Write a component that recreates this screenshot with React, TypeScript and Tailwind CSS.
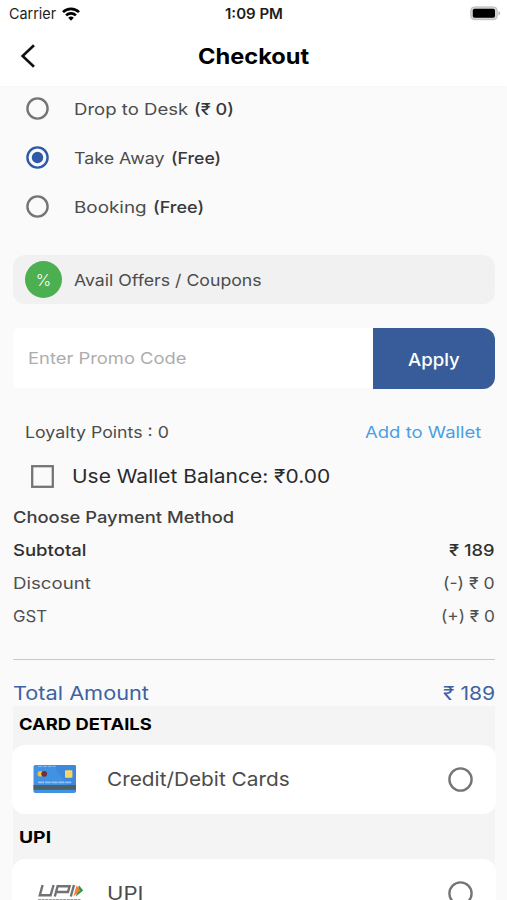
import { useLayoutEffect, useRef } from "react";
import type { ReactNode } from "react";
import clsx from "clsx";

/** Single line of text stretched horizontally to fill the width set by its classes. */
function Label({ children, className }: { children: ReactNode; className?: string }) {
  const box = useRef<HTMLSpanElement>(null);
  const inner = useRef<HTMLSpanElement>(null);
  useLayoutEffect(() => {
    if (!box.current || !inner.current) return;
    const ratio = box.current.clientWidth / inner.current.offsetWidth;
    inner.current.style.transform = `scaleX(${ratio})`;
  });
  return (
    <span ref={box} className={clsx("block shrink-0 whitespace-nowrap", className)}>
      <span ref={inner} className="inline-block origin-left">
        {children}
      </span>
    </span>
  );
}

function Radio({ checked, large }: { checked?: boolean; large?: boolean }) {
  return (
    <svg
      viewBox={large ? "0 0 25 25" : "0 0 23 23"}
      className={clsx("block shrink-0", large ? "size-[25px]" : "size-[23px]", checked ? "text-[#2f5aa8]" : "text-[#757575]")}
    >
      <circle cx="50%" cy="50%" r={large ? 11.1 : 10.1} fill="none" stroke="currentColor" strokeWidth="2.4" />
      {checked && <circle cx="50%" cy="50%" r="5.7" fill="currentColor" />}
    </svg>
  );
}

function StatusBar() {
  return (
    <div className="flex h-[27px] items-center pl-[9px] pr-[6px] text-[#1c1c1c]">
      <Label className="w-[47px] text-[15px] leading-[18px]">Carrier</Label>
      <svg className="ml-[6px] h-[14px] w-[18px]" viewBox="0 0 18 14" fill="none" stroke="#000" strokeWidth="2.7">
        <path d="M1 5.1a11.5 11.5 0 0 1 16 0" />
        <path d="M4.1 8.4a7 7 0 0 1 9.8 0" />
        <path d="M9 13.7 6.2 10.8a4.1 4.1 0 0 1 5.6 0Z" fill="#000" stroke="none" />
      </svg>
      <Label className="ml-[145px] w-[58px] text-[14.5px] font-semibold leading-[18px]">1:09 PM</Label>
      <svg className="ml-auto h-[15px] w-[31px]" viewBox="0 0 31 15">
        <rect x="0.8" y="0.9" width="26.4" height="12.8" rx="3.6" fill="#d2d2d2" stroke="#bdbdbd" strokeWidth="1" />
        <rect x="2.8" y="2.8" width="22.2" height="9" rx="1.8" fill="#000" />
        <path d="M28.5 5.2c2.2.6 2.2 3.6 0 4.2Z" fill="#b4b4b4" />
      </svg>
    </div>
  );
}

function Header() {
  return (
    <header className="h-[86px] shrink-0 bg-white shadow-[0_0_2px_rgba(0,0,0,0.03)]">
      <StatusBar />
      <div className="flex h-[57px] items-center">
        <svg className="ml-[20px] h-[24px] w-[16px]" viewBox="0 0 16 24" fill="none" stroke="#111" strokeWidth="2.6">
          <path d="M14 1.2 2.6 12 14 22.8" />
        </svg>
        <Label className="ml-[162px] w-[111px] text-[21.5px] font-bold leading-[28px] text-black">Checkout</Label>
      </div>
    </header>
  );
}

function Delivery({ name, price, nameW, priceW, checked }: { name: string; price: string; nameW: string; priceW: string; checked?: boolean }) {
  return (
    <div className="flex h-[49px] items-center pl-[26px]">
      <Radio checked={checked} />
      <Label className={clsx("ml-[25px] pt-[2px] text-[16.3px] text-[#4c4c4c]", nameW)}>{name}</Label>
      <Label className={clsx("ml-[6px] pt-[2px] text-[16.3px] font-medium text-[#383838]", priceW)}>{price}</Label>
    </div>
  );
}

function Amount({ name, value, nameW, valueW, strong }: { name: string; value: string; nameW: string; valueW: string; strong?: boolean }) {
  return (
    <div
      className={clsx(
        "flex h-[33px] items-center justify-between pl-[13px] pr-[12px] text-[16.3px]",
        strong ? "font-medium text-[#303030]" : "text-[#505050]",
      )}
    >
      <Label className={nameW}>{name}</Label>
      <Label className={valueW}>{value}</Label>
    </div>
  );
}

function CardIcon() {
  return (
    <svg className="-mt-px h-[30px] w-[44px]" viewBox="0 0 44 30">
      <rect x="0.5" y="1" width="42.5" height="28" rx="1.8" fill="#4292e3" />
      <path d="M20 1h21.5a1.5 1.5 0 0 1 1.5 1.5V21H34Z" fill="#3d88dc" />
      <path d="M5 2.4h18" stroke="#8ec1f0" strokeWidth="0.9" strokeDasharray="4 1" />
      <circle cx="7.4" cy="9.8" r="2.8" fill="#edc33f" />
      <circle cx="11.2" cy="9.8" r="2.9" fill="#762f38" />
      <rect x="32" y="6.3" width="7.4" height="7.4" rx="0.8" fill="#f7d564" />
      <path d="M5 18.3h34" stroke="#8dc2f6" strokeWidth="1.8" strokeDasharray="6 0.8" />
      <rect x="0.5" y="21" width="42.5" height="4.8" fill="#4a6268" />
    </svg>
  );
}

function UpiIcon() {
  return (
    <svg className="h-[22px] w-[48px]" viewBox="0 0 48 22">
      <g fill="none" stroke="#727276" strokeWidth="2.4">
        <path d="M5.6 2 2.8 12.3H13.6L16.6 2" />
        <path d="M17.8 13.5 20.6 3.2H32.6L31 9H19.6" />
        <path d="M37 2 33.8 13.5" />
      </g>
      <path d="m42 2.2 4.2 5.3-7.4 6Z" fill="#38924d" />
      <path d="m39.6 2.2 3.6 5.3-6.8 6Z" fill="#f28237" />
      <path d="M1 16.5H43.500" stroke="#9c9c9c" strokeWidth="1.2" strokeDasharray="3 0.6" />
    </svg>
  );
}

function Method({ icon, name, nameW }: { icon: ReactNode; name: string; nameW: string }) {
  return (
    <div className="-mx-px flex h-[69px] shrink-0 items-center rounded-[13px] bg-white pl-[21px] pr-[23px]">
      <div className="w-[74px] shrink-0">{icon}</div>
      <Label className={clsx("text-[19px] leading-[24px] text-[#4c4c4c]", nameW)}>{name}</Label>
      <span className="ml-auto">
        <Radio large />
      </span>
    </div>
  );
}

export default function App() {
  return (
    <div className="flex h-[900px] w-[507px] flex-col overflow-hidden bg-[#fafafa] font-['Inter','Liberation_Sans',sans-serif]">
      <Header />
      <div className="-mt-[2px] shrink-0">
        <Delivery name="Drop to Desk" price="(₹ 0)" nameW="w-[114px]" priceW="w-[40px]" />
        <Delivery name="Take Away" price="(Free)" nameW="w-[91px]" priceW="w-[50px]" checked />
        <Delivery name="Booking" price="(Free)" nameW="w-[73px]" priceW="w-[51px]" />
      </div>

      <div className="ml-[13px] mr-[12px] mt-[24px] flex h-[49px] shrink-0 items-center rounded-[12px] bg-[#f1f1f1] pl-[12px]">
        <span className="flex size-[37px] items-center justify-center rounded-full bg-[#4caf50] pt-[2px] text-[16.5px] font-light text-white">%</span>
        <Label className="ml-[12px] w-[188px] pt-[2px] text-[16.3px] text-[#4c4c4c]">Avail Offers / Coupons</Label>
      </div>

      <div className="ml-[13px] mr-[12px] mt-[24px] flex h-[61px] shrink-0">
        <div className="flex h-[60px] flex-1 items-center rounded-l-[6px] bg-white pl-[15px]">
          <Label className="w-[159px] text-[16.3px] text-[#adadad]">Enter Promo Code</Label>
        </div>
        <button className="flex w-[122.5px] items-center justify-center rounded-r-[12px] bg-[#385c99] pt-[3px] text-white">
          <Label className="w-[52px] text-left text-[17.5px] font-medium">Apply</Label>
        </button>
      </div>

      <div className="mt-[26px] flex h-[34px] shrink-0 items-center justify-between pl-[25px] pr-[26px] text-[16.3px]">
        <Label className="w-[144px] text-[#4c4c4c]">Loyalty Points : 0</Label>
        <Label className="w-[116px] text-[#4a9fe3]">Add to Wallet</Label>
      </div>
      <div className="mt-[4px] flex h-[46px] shrink-0 items-center pl-[31px]">
        <svg className="size-[23px] shrink-0" viewBox="0 0 23 23">
          <rect x="1.2" y="1.2" width="20.6" height="20.6" fill="none" stroke="#757575" strokeWidth="2.3" />
        </svg>
        <Label className="ml-[18px] w-[258px] pt-[2px] text-[18.7px] text-[#2a2a2a]">Use Wallet Balance: ₹0.00</Label>
      </div>

      <div className="mt-[2px] flex h-[33px] shrink-0 items-center pl-[13px]">
        <Label className="w-[221px] text-[16.3px] font-medium text-[#404040]">Choose Payment Method</Label>
      </div>
      <div className="shrink-0">
        <Amount name="Subtotal" value="₹ 189" nameW="w-[74px]" valueW="w-[46px]" strong />
        <Amount name="Discount" value="(-) ₹ 0" nameW="w-[78px]" valueW="w-[52px]" />
        <Amount name="GST" value="(+) ₹ 0" nameW="w-[34px]" valueW="w-[54px]" />
      </div>
      <div className="ml-[13px] mr-[12px] mt-[26px] h-px shrink-0 bg-[#c9c9c9]" />
      <div className="flex h-[46px] shrink-0 items-start justify-between pl-[13px] pr-[12px] pt-[20px] text-[18.7px] leading-[28px] text-[#3d62a3]">
        <Label className="w-[136px]">Total Amount</Label>
        <Label className="w-[52px]">₹ 189</Label>
      </div>

      <section className="ml-[13px] mr-[12px] flex h-[194px] shrink-0 flex-col bg-[#f4f4f4]">
        <h2 className="flex h-[39px] shrink-0 items-center pb-[3px] pl-[6px] text-[16.3px] font-bold text-black">
          <Label className="w-[133px]">CARD DETAILS</Label>
        </h2>
        <Method icon={<CardIcon />} name="Credit/Debit Cards" nameW="w-[183px]" />
        <h2 className="flex h-[45px] shrink-0 items-center pl-[6px] pt-[2px] text-[16.3px] font-bold text-black">
          <Label className="w-[32px]">UPI</Label>
        </h2>
        <Method icon={<div className="ml-[4px]"><UpiIcon /></div>} name="UPI" nameW="w-[36px]" />
      </section>
    </div>
  );
}
